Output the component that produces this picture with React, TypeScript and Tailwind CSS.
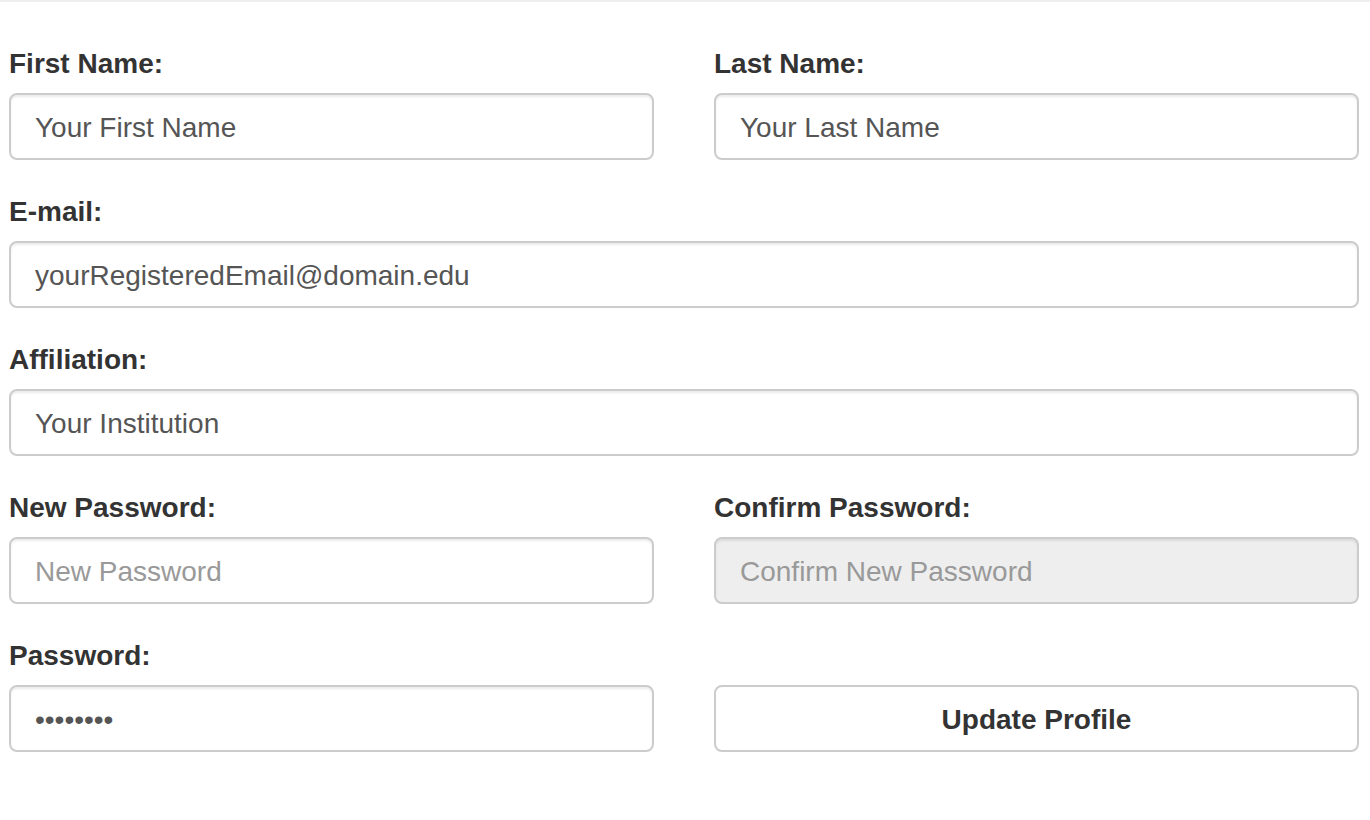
const labelCls = "block h-[42px] leading-[42px] mb-[8px] text-[28px] font-bold text-[#333]";
const inputCls =
  "block w-full h-[67px] px-[24px] pt-[2px] rounded-[8px] border-2 border-[#ccc] bg-white text-[28px] text-[#555] placeholder:text-[#999] shadow-[inset_0_2px_2px_rgba(0,0,0,0.075)] outline-none";

const Field = ({ label, children }: { label?: string; children: React.ReactNode }) => (
  <div className="mb-[31px]">
    {label ? <label className={labelCls}>{label}</label> : <div className="h-[42px] mb-[8px]" />}
    {children}
  </div>
);

export default function App() {
  return (
    <div
      className="min-h-screen bg-white border-t-2 border-[#eee]"
      style={{ fontFamily: '"Liberation Sans", Arial, sans-serif' }}
    >
      <form className="pl-[9px] pr-[11px] pt-[41px]" onSubmit={(e) => e.preventDefault()}>
        <div className="grid grid-cols-2 gap-x-[60px]">
          <Field label="First Name:">
            <input className={inputCls} defaultValue="Your First Name" />
          </Field>
          <Field label="Last Name:">
            <input className={inputCls} defaultValue="Your Last Name" />
          </Field>
        </div>
        <Field label="E-mail:">
          <input className={inputCls} defaultValue="yourRegisteredEmail@domain.edu" />
        </Field>
        <Field label="Affiliation:">
          <input className={inputCls} defaultValue="Your Institution" />
        </Field>
        <div className="grid grid-cols-2 gap-x-[60px]">
          <Field label="New Password:">
            <input type="password" className={inputCls} placeholder="New Password" />
          </Field>
          <Field label="Confirm Password:">
            <input
              type="password"
              disabled
              className={inputCls + " !bg-[#eee]"}
              placeholder="Confirm New Password"
            />
          </Field>
          <Field label="Password:">
            <input type="password" className={inputCls} defaultValue="password" />
          </Field>
          <Field>
            <button
              type="submit"
              className="block w-full h-[67px] pt-[2px] rounded-[8px] border-2 border-[#ccc] bg-white text-[28px] font-bold text-[#333]"
            >
              Update Profile
            </button>
          </Field>
        </div>
      </form>
    </div>
  );
}
